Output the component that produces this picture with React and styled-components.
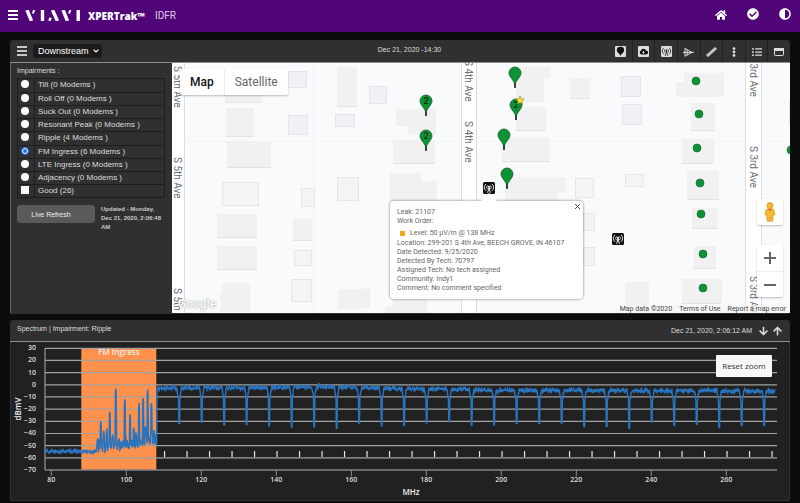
import { useState } from 'react'
import styled, { createGlobalStyle } from 'styled-components'
import { FaHome, FaCheckCircle, FaAdjust, FaListUl, FaEllipsisV, FaArrowDown, FaArrowUp } from 'react-icons/fa'

const GlobalStyle = createGlobalStyle`
  * {
    box-sizing: border-box;
  }
  body {
    margin: 0;
    background: #0c0c0c;
    color: #ddd;
    font-family: "Liberation Sans", Arial, sans-serif;
    font-size: 7px;
  }
  button {
    font: inherit;
    color: inherit;
    padding: 0;
    border: none;
    background: none;
    cursor: pointer;
  }
`

const Header = styled.header`
  height: 32px;
  padding: 0 9px 2px 8px;
  display: flex;
  align-items: center;
  background: #500678;
  color: #fff;
`

const Burger = styled.button`
  width: 10px;
  height: 10px;
  display: flex;
  flex-direction: column;
  justify-content: space-between;

  &::before, &::after, span {
    content: "";
    display: block;
    width: 100%;
    height: 2px;
    background: ${p => p.$color || '#fff'};
  }
`

const Logo = styled.svg`
  width: 56px;
  height: 11px;
  margin-left: 7px;
`

const Product = styled.h1`
  margin: 2px 0 0 7px;
  font: 800 10px/12px "Open Sans", sans-serif;
`

const AppName = styled.span`
  margin: 2px 0 0 10px;
  font: 10px/12px Roboto, sans-serif;
  color: #e0cdea;
`

const HeaderIcons = styled.nav`
  margin-left: auto;
  display: flex;
  gap: 20px;
  font-size: 12px;

  button {
    width: 12px;
    display: flex;
    justify-content: center;
  }
`

const Main = styled.main`
  padding: 8px 10px 3px;
  display: flex;
  flex-direction: column;
  gap: 6px;
`

const Panel = styled.section`
  border-radius: 3px 3px 2px 2px;
  background: #303030;
  overflow: hidden;
`

const Toolbar = styled.div`
  height: 23px;
  padding-left: 7px;
  display: grid;
  grid-template-columns: 1fr auto 1fr;
  align-items: center;
  border-bottom: 1px solid #8c8c8c;

  > time {
    padding: 0 0 3px 12px;
  }
`

const ToolbarLeft = styled.div`
  display: flex;
  align-items: center;
  gap: 6px;
`

const ViewSelect = styled.div`
  position: relative;

  select {
    appearance: none;
    width: 69px;
    height: 14px;
    padding: 0 0 0 5px;
    border: none;
    border-radius: 3px;
    background: #1b1b1b;
    color: #fff;
    font: 9px/14px "Liberation Sans", Arial, sans-serif;
  }
  svg {
    position: absolute;
    right: 3px;
    top: 5px;
    pointer-events: none;
  }
`

const Tools = styled.div`
  justify-self: end;
  width: 181px;
  height: 22px;
  display: grid;
  grid-template-columns: repeat(8, 1fr);
  color: #ddd;

  button {
    display: flex;
    align-items: center;
    justify-content: center;
    padding-top: 1px;
    font-size: 10px;
  }
  button + button {
    border-left: 1px solid #222;
  }
`

const MapRow = styled.div`
  height: 251px;
  display: flex;
`

const Sidebar = styled.aside`
  flex: 0 0 162px;
  padding: 3px 7px 0 6px;
  border-left: 1px solid #666;
`

const SidebarTitle = styled.div`
  line-height: 10px;
  margin-bottom: 2px;
`

const Impairments = styled.div`
  height: 120px;
  display: grid;
  grid-template-rows: repeat(9, 1fr);
  border: 1px solid #1e1e1e;
`

const Impairment = styled.label`
  display: grid;
  grid-template-columns: 16px 1fr;
  font-size: 8px;
  line-height: 12px;

  & + & {
    border-top: 1px solid #1e1e1e;
  }
  input {
    appearance: none;
    width: 8px;
    height: 8px;
    margin: 1px 0 0 3px;
    background: #fff;
  }
  input[type='radio'] {
    border-radius: 50%;
  }
  input[type='radio']:checked {
    border: 1px solid #1a73e8;
    background: #1a73e8;
    box-shadow: inset 0 0 0 1px #fff;
  }
  span {
    padding-left: 3px;
    border-left: 1px solid #1e1e1e;
  }
`

const RefreshRow = styled.div`
  margin-top: 7px;
  display: flex;
  gap: 6px;

  button {
    flex: none;
    width: 78px;
    height: 18px;
    padding-right: 10px;
    border-radius: 3px;
    background: #5a5a5a;
    color: #eee;
  }
  span {
    color: #c8c8c8;
    font-size: 6px;
    font-weight: 700;
    line-height: 9px;
  }
`

const MapArea = styled.div`
  position: relative;
  flex: 1;
  height: 250px;
  overflow: hidden;
  background: #f9fafc;
  color: #555;
  font-family: Roboto, sans-serif;

  > svg {
    display: block;
    width: 100%;
    height: 100%;
  }
`

const MapType = styled.div`
  position: absolute;
  left: 8px;
  top: 6px;
  display: flex;
  border-radius: 2px;
  background: #fff;
  box-shadow: 0 1px 2px rgba(0, 0, 0, 0.25);

  button {
    height: 26px;
    padding: 0 10px;
    color: #666;
    font-size: 12px;
  }
  button[aria-pressed='true'] {
    color: #111;
    font-weight: 500;
    border-right: 1px solid #eee;
  }
`

const MapControls = styled.div`
  position: absolute;
  right: 7px;
  bottom: 16px;
  display: flex;
  flex-direction: column;
  gap: 20px;
`

const ControlCard = styled.div`
  width: 26px;
  border-radius: 2px;
  background: #fff;
  box-shadow: 0 1px 2px rgba(0, 0, 0, 0.25);

  button {
    width: 26px;
    height: 26px;
    display: flex;
    align-items: center;
    justify-content: center;
  }
  button + button {
    border-top: 1px solid #eee;
  }
`

const GoogleMark = styled.div`
  position: absolute;
  left: 6px;
  bottom: 1px;
  color: #fff;
  font: 500 12px/16px Roboto, sans-serif;
  text-shadow: 0 0 1px #999, 0 0 2px #bbb;
`

const Attribution = styled.div`
  position: absolute;
  right: 0;
  bottom: 0;
  padding: 0 4px;
  display: flex;
  gap: 7px;
  background: rgba(245, 245, 245, 0.7);
  color: #444;
  font-size: 7px;
  line-height: 8px;

  a {
    color: inherit;
    text-decoration: none;
  }
`

const Popup = styled.div`
  position: absolute;
  left: 218px;
  top: 138px;
  padding: 7px 9px 7px 7px;
  width: 193px;
  height: 98px;
  border-radius: 4px;
  background: #fff;
  box-shadow: 0 0 2px 1px rgba(0, 0, 0, 0.25);
  color: #666;
  font-size: 7px;
  line-height: 9px;
  white-space: nowrap;

  &::before {
    content: "";
    position: absolute;
    left: 91px;
    top: -8px;
    border: 8px solid transparent;
    border-top: none;
    border-bottom-color: #fff;
  }
`

const PopupClose = styled.button`
  position: absolute;
  right: 2px;
  top: 2px;
  width: 7px;
  height: 7px;
  display: flex;
`

const Level = styled.div`
  padding: 3px 0 1px 3px;
  display: flex;
  align-items: center;
  gap: 5px;

  &::before {
    content: "";
    width: 5px;
    height: 5px;
    background: #f5a31a;
  }
`

const SpectrumHeader = styled.div`
  height: 22px;
  padding: 0 8px 0 7px;
  display: flex;
  align-items: center;
  border-bottom: 1px solid #8c8c8c;

  h2 {
    margin: 0 auto 3px 0;
    font: 7px/10px "Liberation Sans", Arial, sans-serif;
  }
  time {
    margin-right: 7px;
  }
  button {
    width: 9px;
    margin-left: 5px;
    font-size: 10px;
    display: flex;
  }
  time + button {
    margin-left: 0;
  }
`

const ChartBox = styled.div`
  position: relative;
  background: #212121;
  border: solid #333;
  border-width: 0 1px 1px;

  > svg {
    display: block;
    width: 100%;
    height: auto;
    font-family: "Open Sans", sans-serif;
  }
`

const ResetZoom = styled.button`
  && {
    position: absolute;
    right: 17px;
    top: 13px;
    width: 56px;
    height: 22px;
    border-radius: 1px;
    background: #f7f7f7;
    color: #333;
    font: 8px/20px "Open Sans", sans-serif;
  }
`

const IMPAIRMENTS = [
  'Tilt (0 Modems )',
  'Roll Off (0 Modems )',
  'Suck Out (0 Modems )',
  'Resonant Peak (0 Modems )',
  'Ripple (4 Modems )',
  'FM Ingress (6 Modems )',
  'LTE Ingress (0 Modems )',
  'Adjacency (0 Modems )'
]

// x, y, width, height
const HOUSES = [
  [53, 27, 37, 13], [54, 45, 28, 29], [55, 78, 44, 27], [45, 151, 40, 24], [45, 183, 40, 24],
  [121, 156, 19, 22], [165, 4, 20, 40], [221, 77, 42, 24],
  [344, 44, 30, 24], [330, 74, 48, 25], [398, 15, 20, 21],
  [519, 40, 24, 28], [510, 76, 32, 25], [515, 108, 32, 29], [520, 145, 26, 21],
  [522, 183, 22, 23], [510, 216, 40, 25], [453, 219, 24, 24]
]

const HOUSE_SHAPES = [
  '50,220 78,220 78,249 48,249 48,230 50,230',
  '166,227 198,225 198,245 166,247',
  '224,46 264,46 264,72 236,72 236,63 224,63',
  '218,110 249,110 249,118 265,118 265,140 218,140',
  '221,230 255,230 255,250 213,250 213,243 221,243',
  '346,4 378,4 378,15 372,15 372,39 344,39 344,6',
  '333,114 394,114 394,130 386,130 386,140 333,140',
  '512,10 552,10 552,34 504,34 504,19 512,19'
]

const GARAGES = [
  [115, 8, 20, 17], [116, 52, 20, 20], [197, 23, 18, 18], [163, 51, 20, 13],
  [449, 13, 20, 21], [450, 41, 20, 21]
]

const SHEDS = [
  [50, 119, 37, 24], [129, 125, 14, 19], [165, 114, 22, 24], [122, 187, 18, 16], [119, 216, 21, 23],
  [403, 115, 19, 20], [411, 150, 12, 18], [411, 184, 12, 19], [453, 111, 19, 13], [617, 38, 20, 24]
]

const ROADS = [[-10, 23], [289, 16], [573, 17]]

const ROAD_LABELS = [
  ['S 5th Ave', 2, 3], ['S 5th Ave', 2, 94], ['S 5th Ave', 2, 225],
  ['S 4th Ave', 293, -3], ['S 4th Ave', 293, 58],
  ['S 3rd Ave', 578, -8], ['S 3rd Ave', 578, 83], ['S 3rd Ave', 578, 213]
]

const DOTS = [[524, 18], [527, 51], [525, 85], [528, 120], [529, 151], [531, 191], [531, 225], [619, 87]]

const PINS = [[343, 10], [344, 42, '2'], [332, 72], [335, 111], [254, 38, '2'], [254, 73, '2']]

const Pin = ({ x, y, label }) => (
  <g transform={`translate(${x} ${y})`}>
    <path d='M-.8 4 L0 15 L.8 4Z' stroke='#111' strokeWidth='1' />
    <path d='M0 12 C-1 7 -6 4 -6 0 A6 6 0 0 1 6 0 C6 4 1 7 0 12Z' fill='#0c9336' stroke='#155c2a' strokeWidth='.8' />
    {label && <text y='3' textAnchor='middle' fontSize='9' fontWeight='500' fill='#06300f'>{label}</text>}
  </g>
)

const Tower = ({ x = 0, y = 0, bg = '#111', fg = '#fff', size = 12 }) => (
  <svg x={x} y={y} width={size} height={size} viewBox='0 0 12 12'>
    <rect width='12' height='12' rx='1.5' fill={bg} />
    <g fill='none' stroke={fg} strokeWidth='.9'>
      <path d='M3 2 A4.4 4.4 0 0 0 3 8.8 M9 2 A4.4 4.4 0 0 1 9 8.8' />
      <path d='M4.6 3.4 A2.6 2.6 0 0 0 4.6 7.2 M7.4 3.4 A2.6 2.6 0 0 1 7.4 7.2' strokeWidth='.8' />
      <path d='M6 5 L6 7 M6 6 L4.6 10.8 M6 6 L7.4 10.8' />
    </g>
    <circle cx='6' cy='4.8' r='1' fill={fg} />
  </svg>
)

const BaseMap = () => (
  <svg aria-label='Street map'>
    <path d='M0 78.5 H618 M141.5 0 V250' stroke='#f3f4f5' />
    {HOUSES.map(([x, y, w, h]) => (
      <g key={`${x}-${y}`}>
        <rect x={x} y={y} width={w} height={h} fill='#f1f1f1' />
        <rect x={x} y={y + h - 1} width={w} height='1' fill='#e3e3e3' />
      </g>
    ))}
    {HOUSE_SHAPES.map(points => <polygon key={points} points={points} fill='#f1f1f1' />)}
    {GARAGES.map(([x, y, w, h]) => (
      <rect key={`${x}-${y}`} x={x + .5} y={y + .5} width={w - 1} height={h - 1} fill='#f1f0f5' stroke='#e6e5ea' />
    ))}
    {SHEDS.map(([x, y, w, h]) => (
      <rect key={`${x}-${y}`} x={x + .5} y={y + .5} width={w - 1} height={h - 1} fill='#f3f4f6' stroke='#e6e7e9' />
    ))}
    {ROADS.map(([x, w]) => (
      <rect key={x} x={x + .5} y='-2' width={w - 1} height='255' fill='#fff' stroke='#dcdce2' />
    ))}
    {ROAD_LABELS.map(([name, x, y]) => (
      <text key={`${x}-${y}`} transform={`translate(${x} ${y}) rotate(90)`} fontSize='10' fill='#6b6e73'>{name}</text>
    ))}
    {DOTS.map(([x, y]) => <circle key={y} cx={x} cy={y} r='4' fill='#0c9336' stroke='#1c6b33' strokeWidth='.7' />)}
    {PINS.map(([x, y, label]) => <Pin key={`${x}-${y}`} x={x} y={y} label={label} />)}
    <path
      d='M348 33 L349.2 36 L352.2 36.2 L349.9 38.2 L350.7 41.3 L348 39.6 L345.3 41.3 L346.1 38.2 L343.8 36.2 L346.8 36Z'
      fill='#ffe83a'
      stroke='#8a7a10'
      strokeWidth='.6'
    />
    <Tower x={311} y={119} />
    <Tower x={440} y={170} />
  </svg>
)

const Pegman = () => (
  <svg width='12' height='20' viewBox='0 0 12 20' fill='#f8b932' stroke='#d58a1c' strokeWidth='.6'>
    <path d='M2.6 7.2 Q6 5.6 9.4 7.2 Q10.8 8.4 10.8 13 L9.2 13.4 L8.8 19.2 L6.6 19.6 L6 15 L5.4 19.6 L3.2 19.2 L2.8 13.4 L1.2 13 Q1.2 8.4 2.6 7.2Z' />
    <circle cx='6' cy='3.6' r='3.1' />
    <path d='M4 7 L6 9.4 L8 7Z' fill='#e0662c' stroke='none' />
  </svg>
)

const SPIKES = [
  [92.4, -44], [93.2, -30], [94, -38], [94.8, -36], [95.6, -22], [96.4, -41], [97.2, -3], [98.1, -44],
  [99.6, -12], [101, -24], [102, -35], [102.6, -39], [103.4, -15], [104.5, -11], [105.1, -34],
  [105.7, -4], [106.7, -15], [107.4, -37]
]

const fx = mhz => 40.3 + (mhz - 80) * 3.75
const fy = db => 42.8 - db * 1.217

const noise = i => {
  const v = Math.sin(i * 127.1) * 43758.5453
  return (v - Math.floor(v)) * 2 - 1
}

const buildTrace = () => {
  const points = []
  for (let i = 0; i <= 1945; i++) {
    const f = 78.5 + i * 0.1
    let db
    if (f < 92) {
      db = -54.8 + noise(i) * 1.8
    } else if (f < 108.2) {
      db = -54 + (f - 92) * 0.35 + noise(i) * 2 + Math.max(0, noise(i + 7)) * 9
      const spike = SPIKES.find(s => Math.abs(s[0] - f) < 0.15)
      if (spike) db = spike[1] - Math.abs(spike[0] - f) * 30
    } else {
      const base = f < 150 ? -3 + (f - 108) * 0.035 : f < 195 ? -1.5 - (f - 150) * 0.065 : -4.4 - (f - 195) * 0.009
      db = base + noise(i) * 1.8
      // channel edges sit every 6 MHz
      const channel = Math.round((f - 114.1) / 6)
      const off = Math.abs(f - 114.1 - channel * 6)
      if (channel >= 0 && off < 0.12) db = -33 + noise(channel + 3) * 3
      else if (channel >= 0 && off < 0.6) db -= (0.6 - off) * 20
    }
    points.push(`${fx(f).toFixed(1)},${fy(db).toFixed(1)}`)
  }
  return points.join(' ')
}

const TRACE = buildTrace()
const DB_TICKS = [30, 20, 10, 0, -10, -20, -30, -40, -50, -60, -70]
const MHZ_TICKS = [80, 100, 120, 140, 160, 180, 200, 220, 240, 260]
const CHANNEL_MARKS = Array.from({ length: 28 }, (_, i) => 110.2 + i * 6)

const SpectrumChart = () => (
  <svg viewBox='0 0 778 158' role='img' aria-label='Spectrum'>
    <rect x={fx(88)} y={fy(30)} width='75' height={fy(-70) - fy(30)} fill='#ff914d' />
    {DB_TICKS.map(db => (
      <g key={db}>
        <line x1='34' x2='766' y1={fy(db)} y2={fy(db)} stroke={db === -70 ? '#80808a' : '#a2a2a2'} strokeWidth={db === -70 ? 1.6 : 1.2} />
        <text x='25' y={fy(db) + 2} textAnchor='end' fontSize='7' fontWeight='600' fill='#ddd'>
          {String(db).replace('-', '−')}
        </text>
      </g>
    ))}
    <line x1='34' x2='34' y1={fy(30)} y2={fy(-70)} stroke='#b0b0b8' />
    {MHZ_TICKS.map(mhz => (
      <g key={mhz}>
        <line x1={fx(mhz)} x2={fx(mhz)} y1='128' y2='134' stroke='#8a8a94' />
        <text x={fx(mhz)} y='140' textAnchor='middle' fontSize='7' fontWeight='600' fill='#ddd'>{mhz}</text>
      </g>
    ))}
    {CHANNEL_MARKS.map(mhz => (
      <line key={mhz} x1={fx(mhz)} x2={fx(mhz)} y1='109' y2='115' stroke='#e8e8e8' strokeWidth='1.2' />
    ))}
    <text x={fx(98)} y='13' textAnchor='middle' fontSize='8' fontWeight='600' fill='#f6ece4'>FM Ingress</text>
    <polyline points={TRACE} fill='none' stroke='#2a73bd' strokeWidth='1.4' />
    <text transform='translate(10 67) rotate(-90)' textAnchor='middle' fontSize='8' fontWeight='600' fill='#eee'>dBmV</text>
    <text x='400' y='153' textAnchor='middle' fontSize='8' fontWeight='600' fill='#eee'>MHz</text>
  </svg>
)

const App = () => {
  const [impairment, setImpairment] = useState('FM Ingress (6 Modems )')

  return (
    <>
      <GlobalStyle />
      <Header>
        <Burger aria-label='Menu'><span /></Burger>
        <Logo viewBox='0 0 56 11' stroke='#fff' strokeWidth='3.4'>
          <line x1='2' y1='0' x2='6.5' y2='11' />
          <line x1='9.2' y1='0' x2='7.8' y2='3.5' strokeWidth='2' />
          <line x1='17.5' y1='0' x2='17.5' y2='11' />
          <line x1='24.4' y1='11' x2='25.6' y2='7.6' strokeWidth='2.4' />
          <line x1='27.5' y1='0' x2='32.5' y2='11' />
          <line x1='38' y1='0' x2='42.5' y2='11' />
          <line x1='45.4' y1='0' x2='44' y2='3.5' strokeWidth='2' />
          <line x1='53.2' y1='0' x2='53.2' y2='11' />
        </Logo>
        <Product>XPERTrak™</Product>
        <AppName>IDFR</AppName>
        <HeaderIcons>
          <button aria-label='Home'><FaHome size={14} /></button>
          <button aria-label='Status'><FaCheckCircle /></button>
          <button aria-label='Contrast'><FaAdjust /></button>
        </HeaderIcons>
      </Header>
      <Main>
        <Panel>
          <Toolbar>
            <ToolbarLeft>
              <Burger aria-label='Panel menu' $color='#c8c8c8'><span /></Burger>
              <ViewSelect>
                <select aria-label='View' defaultValue='Downstream'>
                  <option>Downstream</option>
                  <option>Upstream</option>
                </select>
                <svg width='6' height='4' viewBox='0 0 6 4' fill='none' stroke='#fff' strokeWidth='1.2'>
                  <path d='M.6 .6 L3 3 L5.4 .6' />
                </svg>
              </ViewSelect>
            </ToolbarLeft>
            <time>Dec 21, 2020 -14:30</time>
            <Tools>
              <button aria-label='Markers'>
                <svg width='11' height='11' viewBox='0 0 11 11'>
                  <rect width='11' height='11' rx='1' fill='#ddd' />
                  <path d='M5.5 10 C5 7.6 1.8 6.6 1.8 4.2 A3.7 3.4 0 0 1 9.2 4.2 C9.2 6.6 6 7.6 5.5 10Z' fill='#111' />
                </svg>
              </button>
              <button aria-label='Upload'>
                <svg width='11' height='11' viewBox='0 0 11 11'>
                  <rect width='11' height='11' rx='1' fill='#ddd' />
                  <path d='M3.2 8.4 A1.9 1.9 0 0 1 2.9 4.8 A2.7 2.7 0 0 1 8 4.4 A2 2 0 0 1 8.2 8.4Z' fill='#111' />
                  <path d='M5.5 4.8 L7 6.5 H6 V7.8 H5 V6.5 H4Z' fill='#ddd' />
                </svg>
              </button>
              <button aria-label='Leaks'><Tower size={11} bg='#ddd' fg='#222' /></button>
              <button aria-label='Amplifiers'>
                <svg width='11' height='11' viewBox='0 0 11 11' fill='none' stroke='#ddd' strokeWidth='1'>
                  <path d='M2 2.4 L9 6.4 L2 10.2Z M0 6.4 H11 M4.2 4 V9' />
                </svg>
              </button>
              <button aria-label='Measure'>
                <svg width='11' height='11' viewBox='0 0 11 11'>
                  <path d='M1 10 L10 2' stroke='#ccc' strokeWidth='3' />
                  <path d='M2 8 L3.2 9.2 M4 6.3 L5.2 7.5 M6 4.6 L7.2 5.8 M8 2.9 L9.2 4.1' stroke='#777' strokeWidth='.5' />
                </svg>
              </button>
              <button aria-label='More'><FaEllipsisV /></button>
              <button aria-label='List'><FaListUl /></button>
              <button aria-label='Window'>
                <svg width='10' height='8' viewBox='0 0 10 8'>
                  <rect x='.5' y='.5' width='9' height='7' rx='.8' fill='none' stroke='#ddd' />
                  <rect width='10' height='3' fill='#ddd' />
                </svg>
              </button>
            </Tools>
          </Toolbar>
          <MapRow>
            <Sidebar>
              <SidebarTitle>Impairments :</SidebarTitle>
              <Impairments>
                {IMPAIRMENTS.map(name => (
                  <Impairment key={name}>
                    <input type='radio' name='impairment' checked={impairment === name} onChange={() => setImpairment(name)} />
                    <span>{name}</span>
                  </Impairment>
                ))}
                <Impairment>
                  <input type='checkbox' />
                  <span>Good (26)</span>
                </Impairment>
              </Impairments>
              <RefreshRow>
                <button>Live Refresh</button>
                <span>Updated - Monday, Dec 21, 2020, 2:06:48 AM</span>
              </RefreshRow>
            </Sidebar>
            <MapArea>
              <BaseMap />
              <GoogleMark>Google</GoogleMark>
              <MapType>
                <button aria-pressed='true'>Map</button>
                <button aria-pressed='false'>Satellite</button>
              </MapType>
              <Popup>
                <PopupClose aria-label='Close'>
                  <svg width='7' height='7' viewBox='0 0 7 7' stroke='#555'><path d='M1 1 L6 6 M6 1 L1 6' /></svg>
                </PopupClose>
                <div>Leak: 21107</div>
                <div>Work Order:</div>
                <Level>Level: 50 μV/m @ 138 MHz</Level>
                <div>Location: 299-201 S 4th Ave, BEECH GROVE, IN 46107</div>
                <div>Date Detected: 9/25/2020</div>
                <div>Detected By Tech: 70797</div>
                <div>Assigned Tech: No tech assigned</div>
                <div>Community: Indy1</div>
                <div>Comment: No comment specified</div>
              </Popup>
              <MapControls>
                <ControlCard>
                  <button aria-label='Street View'><Pegman /></button>
                </ControlCard>
                <ControlCard>
                  <button aria-label='Zoom in'>
                    <svg width='12' height='12' stroke='#666' strokeWidth='2'><path d='M0 6 H12 M6 0 V12' /></svg>
                  </button>
                  <button aria-label='Zoom out'>
                    <svg width='12' height='12' stroke='#666' strokeWidth='2'><path d='M0 6 H12' /></svg>
                  </button>
                </ControlCard>
              </MapControls>
              <Attribution>
                <span>Map data ©2020</span>
                <a href='#terms'>Terms of Use</a>
                <a href='#report'>Report a map error</a>
              </Attribution>
            </MapArea>
          </MapRow>
        </Panel>
        <Panel>
          <SpectrumHeader>
            <h2>Spectrum | Impairment: Ripple</h2>
            <time>Dec 21, 2020, 2:06:12 AM</time>
            <button aria-label='Move down'><FaArrowDown /></button>
            <button aria-label='Move up'><FaArrowUp /></button>
          </SpectrumHeader>
          <ChartBox>
            <SpectrumChart />
            <ResetZoom>Reset zoom</ResetZoom>
          </ChartBox>
        </Panel>
      </Main>
    </>
  )
}

export default App
